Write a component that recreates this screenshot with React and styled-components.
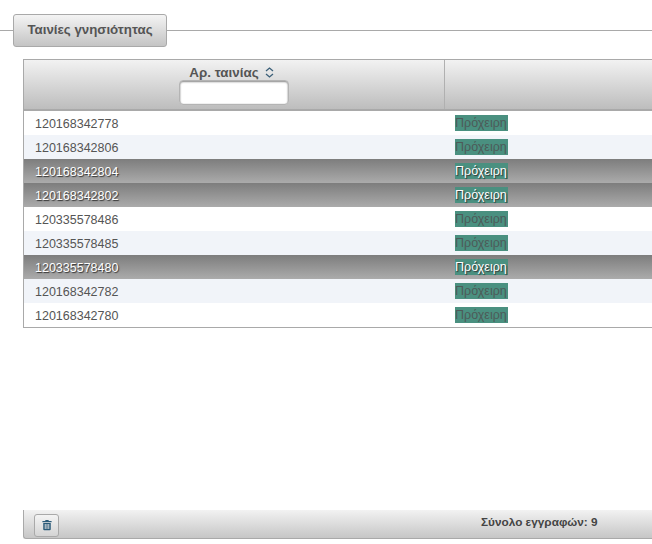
import React from "react";
import styled, { createGlobalStyle } from "styled-components";

const rows = [
  { id: "120168342778" },
  { id: "120168342806" },
  { id: "120168342804", selected: true },
  { id: "120168342802", selected: true },
  { id: "120335578486" },
  { id: "120335578485" },
  { id: "120335578480", selected: true },
  { id: "120168342782" },
  { id: "120168342780" },
];

function App() {
  return (
    <Page>
      <GlobalStyle />
      <Section>
        <Legend>Ταινίες γνησιότητας</Legend>
        <Content>
          <Table>
            <HeaderRow>
              <HeaderCell>
                <SortLabel>
                  Αρ. ταινίας
                  <svg width="9" height="11" viewBox="0 0 9 11" fill="none" stroke="#3b5f78" strokeWidth="1.3">
                    <path d="M1 4 L4.5 1 L8 4" />
                    <path d="M1 7 L4.5 10 L8 7" />
                  </svg>
                </SortLabel>
                <FilterInput />
              </HeaderCell>
              <HeaderCell />
            </HeaderRow>
            {rows.map((row, i) => (
              <Row key={row.id} $odd={i % 2 === 1} $selected={row.selected}>
                <Cell>
                  <RollNumber>{row.id}</RollNumber>
                </Cell>
                <Cell>
                  <Status $selected={row.selected}>Πρόχειρη</Status>
                </Cell>
              </Row>
            ))}
          </Table>
          <Footer>
            <DeleteButton>
              <svg width="10" height="12" viewBox="0 0 12 13" fill="#2a5a78">
                <path d="M4 0.5 H8 V1.7 H11.5 V3.2 H0.5 V1.7 H4 Z" />
                <path d="M1.5 4 H10.5 V11.5 Q10.5 12.8 9.2 12.8 H2.8 Q1.5 12.8 1.5 11.5 Z M3.3 5.3 V11.4 H4.4 V5.3 Z M5.45 5.3 V11.4 H6.55 V5.3 Z M7.6 5.3 V11.4 H8.7 V5.3 Z" fillRule="evenodd" />
              </svg>
            </DeleteButton>
            <Total>Σύνολο εγγραφών: 9</Total>
          </Footer>
        </Content>
      </Section>
    </Page>
  );
}

export default App;

const GlobalStyle = createGlobalStyle`
  html, body {
    margin: 0;
    padding: 0;
    background: #fff;
    overflow: hidden;
  }
  body {
    font-family: "Liberation Sans", Arial, sans-serif;
  }
`;

const Page = styled.div`
  width: 652px;
  height: 544px;
  overflow: hidden;
  padding-top: 14px;
  box-sizing: border-box;
`;

const Section = styled.fieldset`
  margin: 0;
  padding: 0;
  border: none;
  border-top: 1px solid #a9a9a9;
  width: 760px;
  min-width: 0;
  box-sizing: border-box;
`;

const Legend = styled.legend`
  display: flex;
  align-items: center;
  justify-content: center;
  margin-left: 13px;
  padding: 0 0 2px;
  width: 154px;
  height: 33px;
  box-sizing: border-box;
  font-size: 13.3px;
  font-weight: bold;
  color: #555;
  border: 1px solid #a9a9a9;
  border-radius: 3px;
  background: linear-gradient(#f4f4f4, #c4c4c4);
`;

const Content = styled.div`
  padding: 12px 0 0 23px;
`;

const Table = styled.div`
  width: 737px;
  border: 1px solid #a9a9a9;
  border-right: none;
  box-sizing: border-box;
`;

const HeaderRow = styled.div`
  display: grid;
  grid-template-columns: 421px 1fr;
  height: 51px;
  box-sizing: border-box;
  border-bottom: 2px solid #a9a9a9;
  background: linear-gradient(#f2f2f2, #bdbdbd);
`;

const HeaderCell = styled.div`
  display: flex;
  flex-direction: column;
  align-items: center;
  padding-top: 5px;
  border-right: 1px solid #b0b0b0;
  &:last-child {
    border-right: none;
  }
`;

const SortLabel = styled.div`
  display: flex;
  align-items: center;
  gap: 6px;
  margin-left: -5px;
  font-size: 13.4px;
  font-weight: bold;
  line-height: 15px;
  color: #555;
`;

const FilterInput = styled.input`
  display: block;
  width: 110px;
  height: 25px;
  margin: 0 0 0 -1px;
  padding: 0;
  box-sizing: border-box;
  background: #fff;
  border: 1px solid #b4b4b4;
  border-radius: 4px;
  box-shadow: inset 0 1px 2px #8a8a8a, inset 0 0 1px #a0a0a0;
`;

const Row = styled.div`
  display: grid;
  grid-template-columns: 421px 1fr;
  height: 24px;
  background: ${(p) =>
    p.$selected
      ? "linear-gradient(#7d7d7d, #ababab)"
      : p.$odd
      ? "#f1f4f9"
      : "#fff"};
  color: ${(p) => (p.$selected ? "#fff" : "#555")};
  text-shadow: ${(p) => (p.$selected ? "1px 1px 1px #333" : "none")};
`;

const Cell = styled.div`
  display: flex;
  align-items: center;
  padding-left: 10px;
  font-size: 12.5px;
`;

const RollNumber = styled.span`
  margin-left: 1px;
  padding-top: 2px;
`;

const Status = styled.span`
  display: block;
  width: 53px;
  height: 16px;
  line-height: 17px;
  background: #4a9080;
  color: ${(p) => (p.$selected ? "#fff" : "#4d5a58")};
  white-space: nowrap;
`;

const Footer = styled.div`
  display: flex;
  align-items: center;
  width: 737px;
  height: 29px;
  margin-top: 182px;
  padding-left: 10px;
  box-sizing: border-box;
  border-left: 1px solid #a9a9a9;
  border-bottom: 1px solid #a9a9a9;
  border-radius: 0 0 0 3px;
  background: linear-gradient(#f2f2f2, #c6c6c6);
`;

const DeleteButton = styled.button`
  display: flex;
  align-items: center;
  justify-content: center;
  width: 25px;
  height: 23px;
  margin-top: 2px;
  padding: 0;
  border: 1px solid #a9a9a9;
  border-radius: 3px;
  background: linear-gradient(#f4f4f4, #d4d4d4);
`;

const Total = styled.div`
  margin-left: 422px;
  margin-top: -4px;
  font-size: 11.8px;
  font-weight: bold;
  color: #444;
`;
